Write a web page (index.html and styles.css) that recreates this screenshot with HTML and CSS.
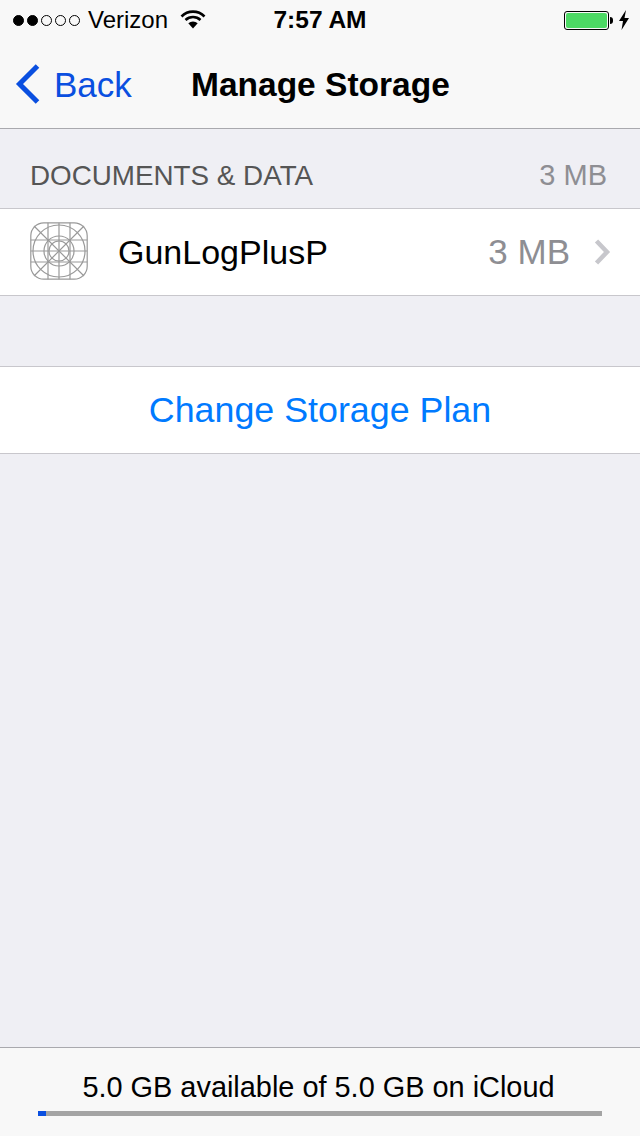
FILE: index.html
```html
<!DOCTYPE html>
<html>
  <head>
    <title>Manage Storage</title>
    <meta name="viewport" content="width=device-width, initial-scale=1">
    <link rel="stylesheet" href="styles.css">
  </head>
  <body>
    <header class="top-bar">
      <div class="status-bar">
        <div class="status-left">
          <div class="signal">
            <span class="dot on"></span>
            <span class="dot on"></span>
            <span class="dot"></span>
            <span class="dot"></span>
            <span class="dot"></span>
          </div>
          <span class="carrier">Verizon</span>
          <svg class="wifi" width="26" height="20" viewBox="0 0 26 20">
            <path d="M1.5 7.5 A16 16 0 0 1 24.500 7.500" fill="none" stroke="#000" stroke-width="2.600"/>
            <path d="M5.500 11 A11 11 0 0 1 20.500 11" fill="none" stroke="#000" stroke-width="2.600"/>
            <path d="M13 19.500 L8.300 14.200 A7 7 0 0 1 17.700 14.200 Z" fill="#000"/>
          </svg>
        </div>
        <div class="clock">7:57 AM</div>
        <div class="status-right">
          <div class="battery"><div class="battery-fill"></div></div>
          <div class="battery-tip"></div>
          <svg class="bolt" width="12" height="20" viewBox="0 0 12 20">
            <path d="M8 0 L1 11 L5 11 L3.500 20 L11 8 L6.500 8 Z" fill="#000"/>
          </svg>
        </div>
      </div>
      <nav class="nav-bar">
        <a class="back">
          <svg class="back-icon" width="26" height="40" viewBox="0 0 26 40">
            <path d="M22.500 2 L4.500 20 L22.500 38" fill="none" stroke="#0a4fe0" stroke-width="5"/>
          </svg>
          <span>Back</span>
        </a>
        <h1 class="nav-title">Manage Storage</h1>
      </nav>
    </header>

    <main class="content">
      <div class="section-header">
        <span>DOCUMENTS &amp; DATA</span>
        <span class="section-size">3 MB</span>
      </div>
      <div class="row app-row">
        <svg class="app-icon" width="58" height="58" viewBox="0 0 58 58" fill="none" stroke="#999" stroke-width="1.200">
          <rect x="0.800" y="0.800" width="56.400" height="56.400" rx="13"/>
          <path d="M0.800 18H57.200M0.800 29H57.200M0.800 40H57.200M18 0.800V57.200M29 0.800V57.200M40 0.800V57.200"/>
          <path d="M4 4L54 54M54 4L4 54"/>
          <circle cx="29" cy="29" r="26"/>
          <circle cx="29" cy="29" r="15"/>
          <circle cx="29" cy="29" r="10"/>
        </svg>
        <span class="app-name">GunLogPlusP</span>
        <span class="app-size">3 MB</span>
        <svg class="chevron" width="18" height="28" viewBox="0 0 18 28">
          <path d="M2.500 3 L13 14 L2.500 25" fill="none" stroke="#c7c7cc" stroke-width="4.500"/>
        </svg>
      </div>
      <div class="row plan-row">Change Storage Plan</div>
    </main>

    <footer class="usage">
      <div class="usage-text">5.0 GB available of 5.0 GB on iCloud</div>
      <div class="usage-bar"><div class="usage-fill" style="width: 8px"></div></div>
    </footer>
  </body>
</html>
```

FILE: styles.css
```css
* {
  box-sizing: border-box;
}
body {
  display: flex;
  flex-direction: column;
  height: 1136px;
  margin: 0;
  overflow: hidden;
  background: #efeff4;
  font-family: "Liberation Sans", Arial, sans-serif;
  color: #000;
}
.top-bar {
  height: 129px;
  background: #f8f8f8;
  border-bottom: 1px solid #a9a9ae;
}
.status-bar {
  display: flex;
  align-items: center;
  justify-content: space-between;
  height: 40px;
  padding: 0 10px 0 13px;
}
.status-left {
  display: flex;
  align-items: center;
  width: 230px;
}
.signal {
  display: flex;
  gap: 3px;
}
.dot {
  width: 11px;
  height: 11px;
  border: 1px solid #000;
  border-radius: 50%;
}
.dot.on {
  background: #000;
}
.carrier {
  margin-left: 8px;
  font-size: 24px;
}
.wifi {
  margin-left: 12px;
  margin-top: -3px;
}
.clock {
  font-size: 24.500px;
  font-weight: bold;
}
.status-right {
  display: flex;
  align-items: center;
  justify-content: flex-end;
  width: 233px;
}
.battery {
  width: 45px;
  height: 19px;
  padding: 1px;
  border: 1px solid #000;
  border-radius: 3px;
}
.battery-fill {
  height: 100%;
  background: #4cd964;
  border-radius: 2px;
}
.battery-tip {
  width: 3px;
  height: 7px;
  margin-left: 1px;
  background: #000;
  border-radius: 0 3px 3px 0;
}
.bolt {
  margin-left: 5px;
}
.nav-bar {
  display: flex;
  align-items: center;
  height: 88px;
  padding-left: 15px;
}
.back {
  display: flex;
  align-items: center;
  width: 176px;
  color: #0a4fe0;
  font-size: 35px;
}
.back span {
  padding-top: 2px;
}
.back-icon {
  margin-right: 13px;
}
.nav-title {
  margin: 0;
  padding-top: 2px;
  font-size: 33.500px;
  font-weight: bold;
}
.content {
  flex: 1;
}
.section-header {
  display: flex;
  align-items: center;
  justify-content: space-between;
  height: 80px;
  padding: 26px 33px 12px 30px;
  border-bottom: 1px solid #c8c7cc;
  color: #555;
  font-size: 27.800px;
}
.section-size {
  color: #8e8e93;
  font-size: 29px;
}
.row {
  display: flex;
  align-items: center;
  height: 87px;
  background: #fff;
  border-bottom: 1px solid #c8c7cc;
}
.app-row {
  padding: 0 28px 0 30px;
  font-size: 34px;
}
.app-icon {
  margin-right: 30px;
  margin-bottom: 2px;
}
.app-name {
  flex: 1;
}
.app-size {
  margin-right: 24px;
  color: #8e8e93;
  font-size: 35px;
}
.plan-row {
  justify-content: center;
  height: 88px;
  margin-top: 70px;
  border-top: 1px solid #c8c7cc;
  color: #007aff;
  font-size: 35.800px;
}
.usage {
  height: 89px;
  padding: 24px 38px 0;
  background: #f8f8f8;
  border-top: 1px solid #a9a9ae;
  text-align: center;
}
.usage-text {
  height: 39px;
  padding-right: 3px;
  font-size: 28.900px;
  line-height: 30px;
}
.usage-bar {
  height: 5px;
  background: #a4a4a4;
}
.usage-fill {
  height: 100%;
  background: #0a4fe0;
}
```
